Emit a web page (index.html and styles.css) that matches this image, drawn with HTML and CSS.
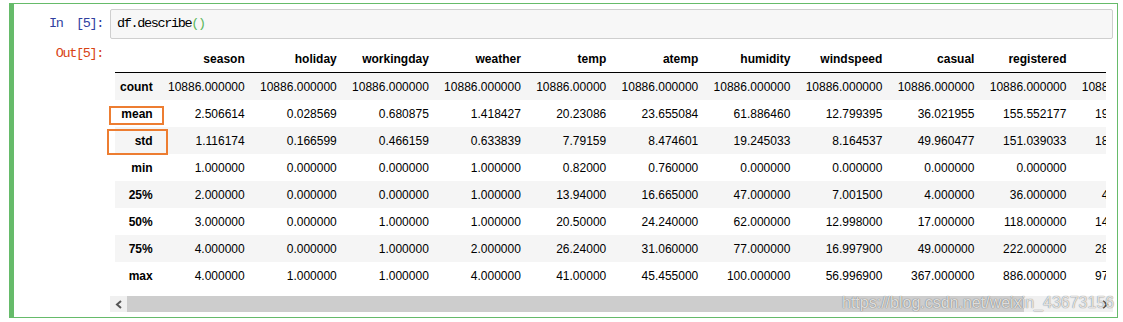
FILE: index.html
```html
<!DOCTYPE html>
<html lang="en">

<head>
    <meta charset="UTF-8">
    <meta name="viewport" content="width=device-width, initial-scale=1.0">
    <title>df.describe()</title>
    <link rel="stylesheet" href="styles.css">
</head>

<body>
    <!-- Selected notebook cell -->
    <div class="cell">
        <div class="input">
            <div class="prompt in-prompt">In&nbsp;&nbsp;[5]:</div>
            <div class="input-area"><span>df.describe</span><span class="paren">()</span></div>
        </div>

        <div class="output">
            <div class="prompt out-prompt">Out[5]:</div>
            <div class="output-area">
                <div class="table-wrap">
                    <table class="dataframe">
                        <thead>
                            <tr>
                                <th></th>
                                <th>season</th>
                                <th>holiday</th>
                                <th>workingday</th>
                                <th>weather</th>
                                <th>temp</th>
                                <th>atemp</th>
                                <th>humidity</th>
                                <th>windspeed</th>
                                <th>casual</th>
                                <th>registered</th>
                                <th>count</th>
                            </tr>
                        </thead>
                        <tbody>
                            <tr>
                                <th>count</th>
                                <td>10886.000000</td><td>10886.000000</td><td>10886.000000</td><td>10886.000000</td>
                                <td>10886.00000</td><td>10886.000000</td><td>10886.000000</td><td>10886.000000</td>
                                <td>10886.000000</td><td>10886.000000</td><td>10886.000000</td>
                            </tr>
                            <tr>
                                <th>mean</th>
                                <td>2.506614</td><td>0.028569</td><td>0.680875</td><td>1.418427</td>
                                <td>20.23086</td><td>23.655084</td><td>61.886460</td><td>12.799395</td>
                                <td>36.021955</td><td>155.552177</td><td>191.574132</td>
                            </tr>
                            <tr>
                                <th>std</th>
                                <td>1.116174</td><td>0.166599</td><td>0.466159</td><td>0.633839</td>
                                <td>7.79159</td><td>8.474601</td><td>19.245033</td><td>8.164537</td>
                                <td>49.960477</td><td>151.039033</td><td>181.144454</td>
                            </tr>
                            <tr>
                                <th>min</th>
                                <td>1.000000</td><td>0.000000</td><td>0.000000</td><td>1.000000</td>
                                <td>0.82000</td><td>0.760000</td><td>0.000000</td><td>0.000000</td>
                                <td>0.000000</td><td>0.000000</td><td>1.000000</td>
                            </tr>
                            <tr>
                                <th>25%</th>
                                <td>2.000000</td><td>0.000000</td><td>0.000000</td><td>1.000000</td>
                                <td>13.94000</td><td>16.665000</td><td>47.000000</td><td>7.001500</td>
                                <td>4.000000</td><td>36.000000</td><td>42.000000</td>
                            </tr>
                            <tr>
                                <th>50%</th>
                                <td>3.000000</td><td>0.000000</td><td>1.000000</td><td>1.000000</td>
                                <td>20.50000</td><td>24.240000</td><td>62.000000</td><td>12.998000</td>
                                <td>17.000000</td><td>118.000000</td><td>145.000000</td>
                            </tr>
                            <tr>
                                <th>75%</th>
                                <td>4.000000</td><td>0.000000</td><td>1.000000</td><td>2.000000</td>
                                <td>26.24000</td><td>31.060000</td><td>77.000000</td><td>16.997900</td>
                                <td>49.000000</td><td>222.000000</td><td>284.000000</td>
                            </tr>
                            <tr>
                                <th>max</th>
                                <td>4.000000</td><td>1.000000</td><td>1.000000</td><td>4.000000</td>
                                <td>41.00000</td><td>45.455000</td><td>100.000000</td><td>56.996900</td>
                                <td>367.000000</td><td>886.000000</td><td>977.000000</td>
                            </tr>
                        </tbody>
                    </table>
                </div>

                <!-- Horizontal scrollbar of the output -->
                <div class="scrollbar">
                    <div class="sb-btn">
                        <svg width="8" height="9" viewBox="0 0 8 9"><polyline points="6,1 2,4.5 6,8" fill="none" stroke="#555" stroke-width="2"/></svg>
                    </div>
                    <div class="sb-track"><div class="sb-thumb"></div></div>
                    <div class="sb-btn">
                        <svg width="8" height="9" viewBox="0 0 8 9"><polyline points="2,1 6,4.5 2,8" fill="none" stroke="#555" stroke-width="2"/></svg>
                    </div>
                </div>

                <!-- Highlight boxes drawn over the index labels -->
                <div class="mark mark-mean"></div>
                <div class="mark mark-std"></div>

                <div class="watermark">https://blog.csdn.net/weixin_43673156</div>
            </div>
        </div>
    </div>
</body>

</html>
```

FILE: styles.css
```css
/* General Styles */
body {
    margin: 0;
    padding: 0;
    background-color: #ffffff;
    font-family: 'Liberation Sans', Arial, sans-serif;
}

/* Cell */
.cell {
    margin: 3px 5px 0 9px;
    border: 1px solid #66bb6a;
    border-left: 5px solid #66bb6a;
    padding: 5px 0 5px 0;
}

.input,
.output {
    display: flex;
}

/* Prompts */
.prompt {
    width: 96px;
    flex: none;
    box-sizing: border-box;
    padding-right: 7px;
    text-align: right;
    font-family: 'Liberation Mono', monospace;
    font-size: 13.5px;
    letter-spacing: -1.35px;
}

.in-prompt {
    color: #303f9f;
    line-height: 30px;
}

.out-prompt {
    color: #d84315;
    padding-top: 7px;
    line-height: 16px;
}

/* Input area */
.input-area {
    flex: 1;
    margin-right: 4px;
    height: 30px;
    box-sizing: border-box;
    border: 1px solid #cfcfcf;
    border-radius: 2px;
    background-color: #f7f7f7;
    padding: 0 6px;
    line-height: 28px;
    font-family: 'Liberation Mono', monospace;
    font-size: 13.5px;
    letter-spacing: -1.35px;
    color: #000000;
}

.input-area .paren {
    color: #5cb85c;
}

/* Output area */
.output-area {
    flex: 1;
    margin-right: 4px;
    min-width: 0;
    position: relative;
}

.table-wrap {
    margin: 7px 7px 0 5px;
    overflow: hidden;
}

/* DataFrame table */
.dataframe {
    border-collapse: collapse;
    border: none;
    font-size: 12px;
    color: #000000;
    white-space: nowrap;
}

.dataframe th,
.dataframe td {
    text-align: right;
    vertical-align: middle;
    padding: 0 7.5px 0 7.8px;
}

.dataframe th {
    font-weight: bold;
}

.dataframe tbody th {
    padding-left: 5px;
}

.dataframe thead th {
    height: 26px;
    border-bottom: 1px solid #000000;
}

.dataframe tbody td,
.dataframe tbody th {
    height: 27px;
}

.dataframe tbody tr:nth-child(odd) {
    background-color: #f5f5f5;
}

/* Scrollbar */
.scrollbar {
    display: flex;
    height: 16px;
    margin-top: 7px;
}

.sb-btn {
    width: 17px;
    flex: none;
    background-color: #f0f0f0;
    display: flex;
    align-items: center;
    justify-content: center;
}

.sb-track {
    flex: 1;
    background-color: #f0f0f0;
}

.sb-thumb {
    width: 897px;
    height: 100%;
    background-color: #cdcdcd;
}

/* Orange highlight boxes */
.mark {
    position: absolute;
    box-sizing: border-box;
    border: 2px solid #ed7d31;
}

.mark-mean {
    left: -1px;
    top: 67px;
    width: 55px;
    height: 19px;
}

.mark-std {
    left: -3px;
    top: 90px;
    width: 61px;
    height: 26px;
}

/* Watermark */
.watermark {
    position: absolute;
    left: 732px;
    top: 255px;
    font-size: 16px;
    line-height: 18px;
    color: rgba(255, 255, 255, 0.8);
    text-shadow: 0 0 1px rgba(0, 0, 0, 0.45), 0 0 1px rgba(0, 0, 0, 0.25);
    white-space: nowrap;
}
```
